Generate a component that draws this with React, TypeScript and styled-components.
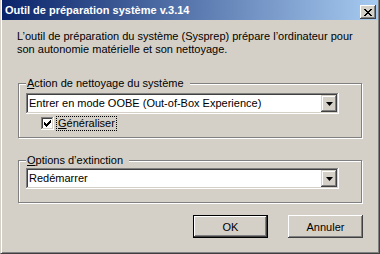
import styled, { createGlobalStyle } from "styled-components";

const GlobalStyle = createGlobalStyle`
  html, body {
    margin: 0;
    padding: 0;
    background: #d4d0c8;
  }
  body {
    font-family: "Liberation Sans", Arial, sans-serif;
    font-size: 11px;
    color: #000;
  }
`;

const raised = `
  box-shadow: inset -1px -1px #404040, inset 1px 1px #ffffff,
    inset -2px -2px #808080, inset 2px 2px #d4d0c8;
`;

const sunken = `
  box-shadow: inset -1px -1px #ffffff, inset 1px 1px #808080,
    inset -2px -2px #d4d0c8, inset 2px 2px #404040;
`;

const Window = styled.div`
  width: 380px;
  height: 254px;
  box-sizing: border-box;
  background: #d4d0c8;
  border-left: 1px solid #d4d0c8;
  border-right: 1px solid #404040;
  border-bottom: 1px solid #404040;
  box-shadow: inset 1px 0 #ffffff, inset -1px -1px #808080;
  display: flex;
  flex-direction: column;
`;

const TitleBar = styled.div`
  height: 20px;
  margin: 0 1px 1px;
  padding: 0 2px 0 3px;
  display: flex;
  align-items: flex-start;
  background: linear-gradient(to right, #0a246a, #a6caf0);
`;

const TitleText = styled.div`
  flex: 1;
  color: #fff;
  font-weight: bold;
  font-size: 11px;
  line-height: 20px;
  white-space: nowrap;
`;

const CloseButton = styled.div`
  width: 16px;
  height: 14px;
  margin-top: 5px;
  background: #d4d0c8;
  ${raised}
  display: flex;
  align-items: center;
  justify-content: center;
`;

const Body = styled.div`
  padding: 0 16px 0 17px;
  display: flex;
  flex-direction: column;
`;

const Description = styled.p`
  margin: 9px 0 0 -1px;
  line-height: 13px;
  white-space: nowrap;
`;

const Group = styled.div<{ $height: number; $top: number; $pad: number }>`
  position: relative;
  box-sizing: border-box;
  width: 344px;
  height: ${(p) => p.$height}px;
  margin-top: ${(p) => p.$top}px;
  padding: ${(p) => p.$pad}px 0 0 7px;
  border: 1px solid #808080;
  box-shadow: 1px 1px 0 #ffffff, inset 1px 1px 0 #ffffff;
`;

const Legend = styled.span`
  position: absolute;
  top: -7px;
  left: 7px;
  padding: 0 6px 0 1px;
  background: #d4d0c8;
  line-height: 13px;
  white-space: nowrap;
`;

const Combo = styled.div`
  box-sizing: border-box;
  width: 313px;
  height: 21px;
  padding: 2px;
  background: #fff;
  ${sunken}
  display: flex;
`;

const ComboText = styled.div`
  flex: 1;
  padding-left: 1px;
  line-height: 17px;
  white-space: nowrap;
  overflow: hidden;
`;

const DropButton = styled.div`
  width: 16px;
  height: 17px;
  background: #d4d0c8;
  box-shadow: inset -1px -1px #404040, inset 1px 1px #d4d0c8,
    inset -2px -2px #808080, inset 2px 2px #ffffff;
  display: flex;
  align-items: center;
  justify-content: center;
`;

const CheckRow = styled.div`
  display: flex;
  align-items: center;
  margin: 3px 0 0 15px;
  gap: 3px;
`;

const CheckBox = styled.div`
  width: 13px;
  height: 13px;
  background: #fff;
  ${sunken}
  display: flex;
  align-items: center;
  justify-content: center;
`;

const FocusLabel = styled.span`
  padding: 0 1px;
  line-height: 13px;
  outline: 1px dotted #000;
  outline-offset: 0;
`;

const ButtonRow = styled.div`
  display: flex;
  justify-content: flex-end;
  gap: 20px;
  margin-top: 12px;
  width: 345px;
`;

const Button = styled.div<{ $default?: boolean }>`
  box-sizing: border-box;
  width: 75px;
  height: 23px;
  display: flex;
  align-items: center;
  justify-content: center;
  background: #d4d0c8;
  border: ${(p) => (p.$default ? "1px solid #000" : "none")};
  ${raised}
`;

const Arrow = () => (
  <svg width="7" height="4" viewBox="0 0 7 4">
    <polygon points="0,0 7,0 3.5,4" fill="#000" />
  </svg>
);

const Check = () => (
  <svg width="7" height="7" viewBox="0 0 7 7" shapeRendering="crispEdges">
    <path d="M0 2h1v1h1v1h1v-1h1v-1h1v-1h1v-1h1v3h-1v1h-1v1h-1v1h-1v1h-1v-1h-1v-1h-1z" fill="#000" />
  </svg>
);

const CloseX = () => (
  <svg width="8" height="7" viewBox="0 0 8 7" shapeRendering="crispEdges">
    <path
      d="M0 0h2v1h1v1h2v-1h1v-1h2v1h-1v1h-1v1h-1v1h1v1h1v1h1v1h-2v-1h-1v-1h-2v1h-1v1h-2v-1h1v-1h1v-1h1v-1h-1v-1h-1v-1h-1z"
      fill="#000"
    />
  </svg>
);

export default function App() {
  return (
    <>
      <GlobalStyle />
      <Window>
        <TitleBar>
          <TitleText>Outil de préparation système v.3.14</TitleText>
          <CloseButton>
            <CloseX />
          </CloseButton>
        </TitleBar>
        <Body>
          <Description>
            L’outil de préparation du système (Sysprep) prépare l’ordinateur pour
            <br />
            son autonomie matérielle et son nettoyage.
          </Description>

          <Group $height={55} $top={27} $pad={9}>
            <Legend>
              <u>A</u>ction de nettoyage du système
            </Legend>
            <Combo>
              <ComboText>Entrer en mode OOBE (Out-of-Box Experience)</ComboText>
              <DropButton>
                <Arrow />
              </DropButton>
            </Combo>
            <CheckRow>
              <CheckBox>
                <Check />
              </CheckBox>
              <FocusLabel>
                <u>G</u>énéraliser
              </FocusLabel>
            </CheckRow>
          </Group>

          <Group $height={43} $top={22} $pad={7}>
            <Legend>
              <u>O</u>ptions d’extinction
            </Legend>
            <Combo>
              <ComboText>Redémarrer</ComboText>
              <DropButton>
                <Arrow />
              </DropButton>
            </Combo>
          </Group>

          <ButtonRow>
            <Button $default>OK</Button>
            <Button>Annuler</Button>
          </ButtonRow>
        </Body>
      </Window>
    </>
  );
}
